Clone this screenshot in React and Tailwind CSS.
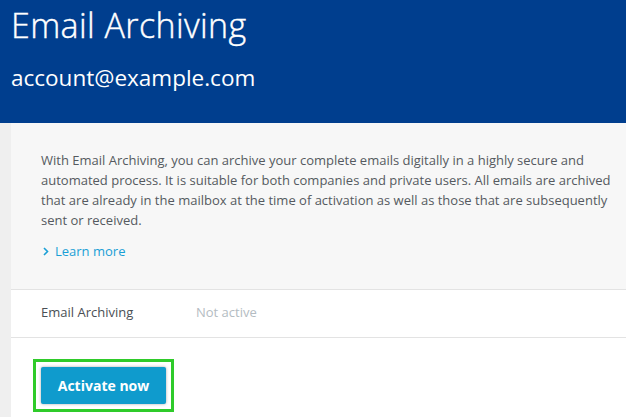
export default function App() {
  return (
    <div className="min-h-[417px] w-[626px] bg-[#efefef] overflow-hidden" style={{ fontFamily: '"Open Sans", sans-serif' }}>
      <div className="bg-[#003e8e] h-[123px] px-[11px] pt-[3px] text-white">
        <h1 className="text-[34px] leading-[44px] font-light tracking-[0.4px] [-webkit-text-stroke:0.4px_white]">Email Archiving</h1>
        <div className="text-[22.5px] leading-[30px] mt-[16px]">account@example.com</div>
      </div>
      <div className="ml-[11px] bg-white">
        <div className="bg-[#f7f7f7] pl-[30px] pr-[10px] pt-[27px] pb-[28px] border-b border-[#e3e3e3]">
          <p className="text-[13px] leading-[20px] text-[#555a60]">
            With Email Archiving, you can archive your complete emails digitally in a highly secure and automated process. It is suitable for both companies and private users. All emails are archived that are already in the mailbox at the time of activation as well as those that are subsequently sent or received.
          </p>
          <a className="mt-[11px] flex items-center gap-[6px] text-[13px] leading-[20px] text-[#1a9fd6]">
            <svg width="6" height="9" viewBox="0 0 6 9" className="ml-[2px]">
              <path d="M1 1l3.5 3.5L1 8" fill="none" stroke="currentColor" strokeWidth="1.6" />
            </svg>
            Learn more
          </a>
        </div>
        <div className="flex items-center h-[48px] pl-[30px] pb-[2px] text-[13px] border-b border-[#e3e3e3]">
          <span className="w-[155px] text-[#4a4f55]">Email Archiving</span>
          <span className="text-[#b4bcc2]">Not active</span>
        </div>
        <div className="pl-[22px] pt-[21px] pb-[8px]">
          <div className="inline-block border-[3px] border-[#2fcb2a] p-[5px]">
            <button className="block bg-[#0f9bcd] text-white font-bold text-[14px] w-[125px] h-[37px] rounded-[2px] shadow-[0_0_3px_rgba(0,0,0,0.35)]">
              Activate now
            </button>
          </div>
        </div>
      </div>
    </div>
  );
}
